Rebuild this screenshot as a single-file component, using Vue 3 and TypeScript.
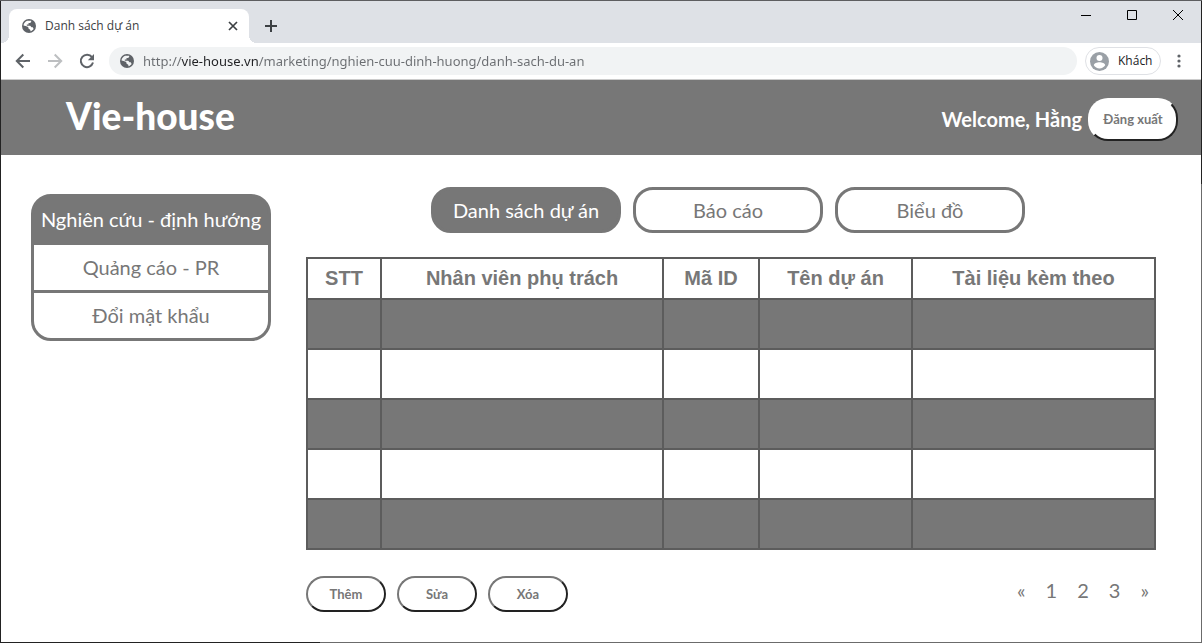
<script setup lang="ts">
import { ref } from 'vue'

const address = ref('http://vie-house.vn/marketing/nghien-cuu-dinh-huong/danh-sach-du-an')

const menu: string[] = ['Nghiên cứu - định hướng', 'Quảng cáo - PR', 'Đổi mật khẩu']
const activeMenu = ref(0)

const tabs: string[] = ['Danh sách dự án', 'Báo cáo', 'Biểu đồ']
const activeTab = ref(0)

interface Column {
  title: string
  size: string
}
const columns: Column[] = [
  { title: 'STT', size: 'c-index' },
  { title: 'Nhân viên phụ trách', size: 'c-staff' },
  { title: 'Mã ID', size: 'c-id' },
  { title: 'Tên dự án', size: 'c-name' },
  { title: 'Tài liệu kèm theo', size: 'c-files' },
]
const rowCount = 5

const actions: string[] = ['Thêm', 'Sửa', 'Xóa']
const pages: string[] = ['«', '1', '2', '3', '»']
</script>

<template>
  <div class="window">
    <div class="strip">
      <div class="browser-tab">
        <svg class="globe" viewBox="0 0 14 14" aria-hidden="true">
          <circle cx="7" cy="7" r="7" fill="#5f6368" />
          <path d="M5.200 1.700h4v1L8.200 4H6.500v1.500H4.800v1.200h3.400l1.300 1.500h1.300l.8 1.800c-.7 1-1.700 1.900-3.200 2.300v-1.300L6.300 9.200V8L3.600 6.900 1.500 6.600C1.600 4.400 3.100 2.400 5.200 1.700z" fill="#fff" />
          <path d="M1.600 6.800l4 3.300v2.400C3.200 12 1.500 9.800 1.600 6.800z" fill="#5f6368" />
        </svg>
        <span class="tab-title">Danh sách dự án</span>
        <button class="icon-btn close-tab" type="button" aria-label="Close tab">
          <svg viewBox="0 0 10 10" width="10" height="10"><path d="M1 1l8 8M9 1l-8 8" stroke="#3c4043" stroke-width="1.700" /></svg>
        </button>
      </div>
      <button class="icon-btn new-tab" type="button" aria-label="New tab">
        <svg viewBox="0 0 12 12" width="12" height="12"><path d="M6 0v12M0 6h12" stroke="#3c4043" stroke-width="2" /></svg>
      </button>
      <div class="controls">
        <button class="icon-btn control" type="button" aria-label="Minimize">
          <svg viewBox="0 0 10 10" width="10" height="10"><path d="M0 5.500h10" stroke="#000" /></svg>
        </button>
        <button class="icon-btn control" type="button" aria-label="Maximize">
          <svg viewBox="0 0 10 10" width="10" height="10"><path d="M.5.5h9v9h-9z" fill="none" stroke="#000" /></svg>
        </button>
        <button class="icon-btn control" type="button" aria-label="Close">
          <svg viewBox="0 0 10 10" width="10" height="10"><path d="M0 0l10 10M10 0L0 10" stroke="#000" /></svg>
        </button>
      </div>
    </div>

    <div class="toolbar">
      <div class="nav">
        <button class="icon-btn" type="button" aria-label="Back">
          <svg viewBox="0 0 16 16" width="16" height="16"><path d="M15 8H2M8.300 1.500L1.800 8l6.500 6.500" fill="none" stroke="#5f6368" stroke-width="2" /></svg>
        </button>
        <button class="icon-btn" type="button" aria-label="Forward">
          <svg viewBox="0 0 16 16" width="16" height="16"><path d="M1 8h13M7.700 1.500L14.200 8l-6.500 6.500" fill="none" stroke="#bdbfc1" stroke-width="2" /></svg>
        </button>
        <button class="icon-btn" type="button" aria-label="Reload">
          <svg viewBox="0 0 16 16" width="16" height="16">
            <path d="M13 4.200A6.200 6.200 0 1 0 14 9.600" fill="none" stroke="#5f6368" stroke-width="2" />
            <path d="M15 1v6.200H8.800z" fill="#5f6368" />
          </svg>
        </button>
      </div>
      <label class="address">
        <svg class="globe" viewBox="0 0 14 14" aria-hidden="true">
          <circle cx="7" cy="7" r="7" fill="#5f6368" />
          <path d="M5.200 1.700h4v1L8.200 4H6.500v1.500H4.800v1.200h3.400l1.300 1.500h1.300l.8 1.800c-.7 1-1.700 1.900-3.200 2.300v-1.300L6.300 9.200V8L3.600 6.900 1.500 6.600C1.600 4.400 3.100 2.400 5.200 1.700z" fill="#f1f3f4" />
          <path d="M1.600 6.800l4 3.300v2.400C3.200 12 1.500 9.800 1.600 6.800z" fill="#5f6368" />
        </svg>
        <input v-model="address" class="url" type="text" aria-label="Address" spellcheck="false" />
      </label>
      <button class="profile" type="button">
        <svg viewBox="0 0 19 19" width="19" height="19" aria-hidden="true">
          <circle cx="9.500" cy="9.500" r="9.500" fill="#9aa0a6" />
          <circle cx="9.500" cy="6" r="3" fill="#fff" />
          <path d="M3.800 13.300c0-2 3.200-3.100 5.700-3.100s5.700 1.100 5.700 3.100c-1.200 1.900-3.300 3.100-5.700 3.100s-4.500-1.200-5.700-3.100z" fill="#fff" />
        </svg>
        <span>Khách</span>
      </button>
      <button class="icon-btn more" type="button" aria-label="Menu">
        <svg viewBox="0 0 4 14" width="4" height="14" fill="#5f6368">
          <circle cx="2" cy="2" r="1.600" /><circle cx="2" cy="7" r="1.600" /><circle cx="2" cy="12" r="1.600" />
        </svg>
      </button>
    </div>

    <header class="banner">
      <h1>Vie-house</h1>
      <div class="account">
        <strong>Welcome, Hằng</strong>
        <button class="outset logout" type="button">Đăng xuất</button>
      </div>
    </header>

    <div class="page">
      <nav class="side">
        <a
          v-for="(item, i) in menu"
          :key="item"
          href="#"
          :class="{ active: i === activeMenu }"
          @click.prevent="activeMenu = i"
        >{{ item }}</a>
      </nav>

      <main>
        <div class="tabs">
          <button
            v-for="(tab, i) in tabs"
            :key="tab"
            type="button"
            :class="{ active: i === activeTab }"
            @click="activeTab = i"
          >{{ tab }}</button>
        </div>

        <table>
          <colgroup>
            <col v-for="c in columns" :key="c.title" :class="c.size" />
          </colgroup>
          <thead>
            <tr>
              <th v-for="c in columns" :key="c.title" scope="col">{{ c.title }}</th>
            </tr>
          </thead>
          <tbody>
            <tr v-for="r in rowCount" :key="r">
              <td v-for="c in columns" :key="c.title"></td>
            </tr>
          </tbody>
        </table>

        <div class="foot">
          <div class="actions">
            <button v-for="a in actions" :key="a" class="outset" type="button">{{ a }}</button>
          </div>
          <nav class="pager" aria-label="Pages">
            <a v-for="p in pages" :key="p" href="#" @click.prevent>{{ p }}</a>
          </nav>
        </div>
      </main>
    </div>
  </div>
</template>

<style>
body {
  margin: 0;
}
</style>

<style scoped>
.window {
  box-sizing: border-box;
  min-height: 100vh;
  padding: 1px;
  display: flex;
  flex-direction: column;
  background:
    linear-gradient(#5d5e60, #5d5e60) top / 100% 1px no-repeat,
    linear-gradient(#222, #222) left / 1px 100% no-repeat,
    linear-gradient(#222 184px, #6b6b6b 184px) right / 1px 100% no-repeat,
    linear-gradient(90deg, #222 320px, #6b6b6b 320px) bottom / 100% 1px no-repeat,
    #fff;
  font-family: Lato, 'Liberation Sans', sans-serif;
  color: #777;
}

button {
  font-family: inherit;
  cursor: pointer;
}

.icon-btn {
  display: flex;
  align-items: center;
  justify-content: center;
  padding: 0;
  border: 0;
  background: none;
}

.strip {
  display: flex;
  height: 42px;
  background: #dee1e6;
}

.browser-tab {
  position: relative;
  box-sizing: border-box;
  width: 240px;
  margin: 8px 0 0 8px;
  padding: 0 11px 0 13px;
  display: flex;
  align-items: center;
  border-radius: 8px 8px 0 0;
  background: #fff;
}

.browser-tab::before,
.browser-tab::after {
  content: '';
  position: absolute;
  bottom: 0;
  width: 8px;
  height: 8px;
}

.browser-tab::before {
  right: 100%;
  background: radial-gradient(circle at 0 0, transparent 8px, #fff 8px);
}

.browser-tab::after {
  left: 100%;
  background: radial-gradient(circle at 100% 0, transparent 8px, #fff 8px);
}

.globe {
  flex: none;
  width: 14px;
  height: 14px;
}

.tab-title {
  flex: 1;
  margin-left: 9px;
  font: 12px/16px 'Open Sans', 'Noto Sans', sans-serif;
  color: #3c4043;
}

.new-tab {
  width: 28px;
  margin: 8px 0 0 8px;
}

.controls {
  display: flex;
  margin-left: auto;
}

.control {
  width: 46px;
  height: 28px;
}

.toolbar {
  box-sizing: border-box;
  height: 37px;
  padding: 0 20px 0 14px;
  display: flex;
  align-items: center;
  border-bottom: 1px solid #ccc;
}

.nav {
  display: flex;
  gap: 16px;
}

.address {
  flex: 1;
  height: 28px;
  margin: 0 8px 0 14px;
  padding-left: 11px;
  display: flex;
  align-items: center;
  border-radius: 14px;
  background: #f1f3f4;
}

.url {
  flex: 1;
  margin-left: 9px;
  padding: 0;
  border: 0;
  outline: 0;
  font: 13px/20px 'Noto Sans', sans-serif;
  color: transparent;
  background: linear-gradient(90deg, #6a6d71 38px, #202124 38px 116px, #6a6d71 116px);
  background-clip: text;
  -webkit-background-clip: text;
}

.profile {
  box-sizing: border-box;
  width: 76px;
  height: 28px;
  margin-right: 16px;
  padding: 0 0 0 4px;
  display: flex;
  align-items: center;
  gap: 9px;
  border: 1px solid #dfe1e5;
  border-radius: 14px;
  background: #fff;
  font: 12px/16px 'Open Sans', 'Noto Sans', sans-serif;
  color: #202124;
}

.banner {
  display: flex;
  justify-content: space-between;
  height: 75px;
  padding: 0 23px 0 65px;
  background: #777;
  color: #fff;
}

h1 {
  margin: 0;
  font-size: 37px;
  line-height: 72px;
  font-weight: 900;
}

.account {
  display: flex;
  align-items: center;
  gap: 6px;
  padding-top: 3px;
  font-size: 20px;
  line-height: 24px;
}

.outset {
  box-sizing: border-box;
  width: 80px;
  height: 36px;
  padding: 0;
  border: 2px solid;
  border-color: #777 #222 #222 #777;
  border-radius: 20px;
  background: #fff;
  font-size: 13px;
  font-weight: 700;
  color: #777;
}

.logout {
  width: 90px;
  height: 43px;
  border-color: #fff #222 #222 #fff;
}

.page {
  display: flex;
  align-items: flex-start;
  gap: 35px;
  padding: 32px 45px 30px 30px;
}

.side {
  box-sizing: border-box;
  flex: none;
  width: 240px;
  margin-top: 7px;
  border: 3px solid #777;
  border-radius: 20px;
  background: #777;
  display: grid;
  gap: 3px;
  overflow: hidden;
}

.side a {
  background: #fff;
  font-size: 20px;
  line-height: 45px;
  text-align: center;
  text-decoration: none;
  white-space: nowrap;
  color: #777;
}

.side a.active {
  background: #777;
  color: #fff;
}

main {
  flex: 1;
  min-width: 0;
}

.tabs {
  display: flex;
  justify-content: center;
  gap: 12px;
  padding-right: 6px;
}

.tabs button {
  width: 190px;
  height: 46px;
  padding: 0;
  border: 3px solid #777;
  border-radius: 20px;
  background: #fff;
  font-size: 20px;
  color: #777;
}

.tabs button.active {
  background: #777;
  color: #fff;
}

table {
  width: 100%;
  margin-top: 24px;
  border-collapse: collapse;
  table-layout: fixed;
}

.c-index {
  width: 74px;
}

.c-staff {
  width: 282px;
}

.c-id {
  width: 96px;
}

.c-name {
  width: 153px;
}

.c-files {
  width: 243px;
}

th,
td {
  box-sizing: border-box;
  padding: 0;
  border: 2px solid #5c5c5c;
}

th {
  height: 41px;
  padding-bottom: 2px;
  font: bold 20px/24px 'Liberation Sans', Arial, sans-serif;
}

td {
  height: 50px;
}

tbody tr:nth-child(odd) {
  background: #777;
}

.foot {
  display: flex;
  justify-content: space-between;
  align-items: flex-start;
  margin-top: 26px;
}

.actions {
  display: flex;
  gap: 11px;
}

.pager {
  display: flex;
  gap: 20px;
  padding: 2px 7px 0 0;
}

.pager a {
  font-size: 20px;
  line-height: 24px;
  text-decoration: none;
  color: #777;
}
</style>
